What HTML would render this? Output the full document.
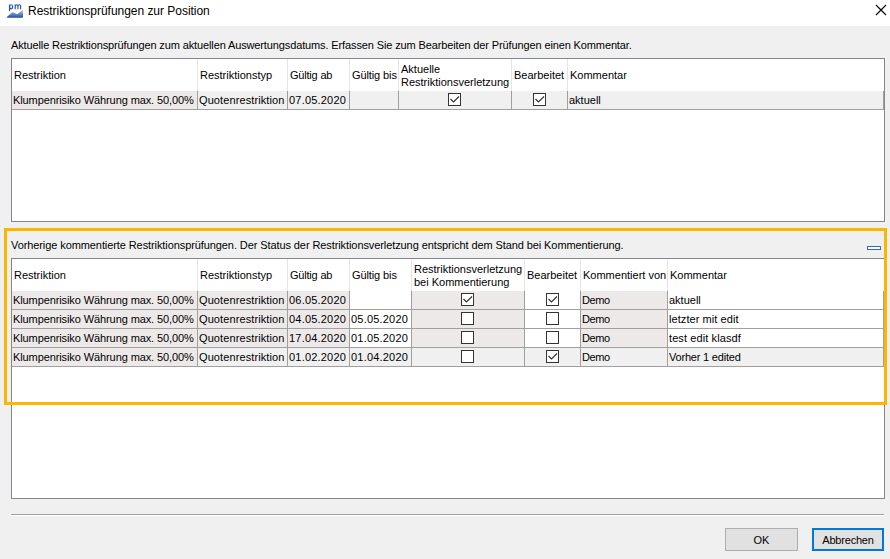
<!DOCTYPE html>
<html><head><meta charset="utf-8">
<style>
*{margin:0;padding:0;box-sizing:border-box}
html,body{width:890px;height:559px;overflow:hidden;background:#f0f0f0;font-family:"Liberation Sans",sans-serif;color:#000}
.a{position:absolute}
.t{position:absolute;font-size:11px;line-height:13px;white-space:nowrap}
#title{position:absolute;left:0;top:0;width:890px;height:26px;background:#fff}
.tbl{position:absolute;left:11px;width:874px;background:#fff;border:1px solid #828790}
.hs{position:absolute;top:0;width:1px;height:32px;background:#e5e5e5}
.row{position:absolute;left:0;height:19px;border-bottom:1px solid #a0a0a0}
.c{position:absolute;top:0;height:18px;border-right:1px solid #a0a0a0}
.p{background:#eee9e9}
.g{background:#f0f0f0}
.w{background:#fff}
.cb{position:absolute;width:13px;height:13px;border:1px solid #333;background:#fff}
.cb svg{position:absolute;left:0;top:0}
.btn{position:absolute;top:528px;width:73px;height:23px;background:#e1e1e1;border:1px solid #adadad;font-size:11px;line-height:21px;padding-top:1px;text-align:center}
</style></head><body>
<div id="title">
  <svg class="a" style="left:0;top:0" width="30" height="26" viewBox="0 0 30 26">
    <defs><linearGradient id="lg" x1="0" y1="9" x2="0" y2="18" gradientUnits="userSpaceOnUse"><stop offset="0" stop-color="#dfe7f5"/><stop offset="0.45" stop-color="#7b9ad0"/><stop offset="1" stop-color="#1a479f"/></linearGradient></defs>
    <g fill="none" stroke="#2452a8" stroke-width="1.15" transform="translate(0 0.4)"><path d="M9.5 4.2 V10.8"/><ellipse cx="11.1" cy="6.45" rx="1.55" ry="2.05"/><path d="M15.2 8.8 V4.2 M15.2 5.6 Q15.6 4.3 16.6 4.3 Q17.9 4.3 17.9 5.6 V8.8 M17.9 5.6 Q18.3 4.3 19.3 4.3 Q20.6 4.3 20.6 5.6 V8.8"/></g>
    <path d="M7 17.2 Q7 16.8 7.4 16.5 L12.4 12 L17.2 14.2 L23 9.5 L23 17 Q23 17.8 22.2 17.8 L7.6 17.8 Q7 17.8 7 17.2 Z" fill="url(#lg)"/>
  </svg>
  <div class="a" style="left:28px;top:4px;font-size:12px;line-height:14px;white-space:nowrap;letter-spacing:-0.03px">Restriktionsprüfungen zur Position</div>
  <svg class="a" style="left:875px;top:4px" width="12" height="12" viewBox="0 0 12 12"><path d="M1 1 L11 11 M11 1 L1 11" stroke="#000" stroke-width="1.1"/></svg>
</div>

<div class="t" style="left:11px;top:39px;letter-spacing:-0.125px">Aktuelle Restriktionsprüfungen zum aktuellen Auswertungsdatums. Erfassen Sie zum Bearbeiten der Prüfungen einen Kommentar.</div>

<div class="tbl" style="top:58px;height:164px">
<div class="hs" style="left:185px"></div>
<div class="hs" style="left:275px"></div>
<div class="hs" style="left:337px"></div>
<div class="hs" style="left:386px"></div>
<div class="hs" style="left:499px"></div>
<div class="hs" style="left:555px"></div>
<div class="t" style="left:2px;top:10px;">Restriktion</div>
<div class="t" style="left:188px;top:10px;">Restriktionstyp</div>
<div class="t" style="left:278px;top:10px;letter-spacing:-0.2px;">Gültig ab</div>
<div class="t" style="left:340px;top:10px;letter-spacing:-0.1px;">Gültig bis</div>
<div class="t" style="left:389px;top:4px">Aktuelle<br>Restriktionsverletzung</div>
<div class="t" style="left:502px;top:10px;">Bearbeitet</div>
<div class="t" style="left:558px;top:10px;">Kommentar</div>
<div class="row" style="top:32px;width:872px">
<div class="c p" style="left:0px;width:186px"></div>
<div class="c g" style="left:186px;width:90px"></div>
<div class="c g" style="left:276px;width:62px"></div>
<div class="c g" style="left:338px;width:49px"></div>
<div class="c g" style="left:387px;width:113px"></div>
<div class="c g" style="left:500px;width:56px"></div>
<div class="c g" style="left:556px;width:316px"></div>
<div class="t" style="left:1px;top:3px;letter-spacing:-0.1px;">Klumpenrisiko Währung max. 50,00%</div>
<div class="t" style="left:187px;top:3px;letter-spacing:0.1px;">Quotenrestriktion</div>
<div class="t" style="left:277px;top:3px;letter-spacing:0.2px;">07.05.2020</div>
<div class="cb" style="left:436px;top:2px"><svg width="11" height="11"><path d="M1.5 5 L4.5 8 L10 2.5" stroke="#333" stroke-width="1.2" fill="none"/></svg></div>
<div class="cb" style="left:521px;top:2px"><svg width="11" height="11"><path d="M1.5 5 L4.5 8 L10 2.5" stroke="#333" stroke-width="1.2" fill="none"/></svg></div>
<div class="t" style="left:557px;top:3px;">aktuell</div>
</div>
</div>
<div class="tbl" style="top:258px;height:241px">
<div class="hs" style="left:185px"></div>
<div class="hs" style="left:275px"></div>
<div class="hs" style="left:337px"></div>
<div class="hs" style="left:399px"></div>
<div class="hs" style="left:512px"></div>
<div class="hs" style="left:568px"></div>
<div class="hs" style="left:655px"></div>
<div class="t" style="left:2px;top:10px;">Restriktion</div>
<div class="t" style="left:188px;top:10px;">Restriktionstyp</div>
<div class="t" style="left:278px;top:10px;letter-spacing:-0.2px;">Gültig ab</div>
<div class="t" style="left:340px;top:10px;letter-spacing:-0.1px;">Gültig bis</div>
<div class="t" style="left:402px;top:4px">Restriktionsverletzung<br>bei Kommentierung</div>
<div class="t" style="left:515px;top:10px;">Bearbeitet</div>
<div class="t" style="left:571px;top:10px;">Kommentiert von</div>
<div class="t" style="left:658px;top:10px;">Kommentar</div>
<div class="row" style="top:32px;width:872px">
<div class="c p" style="left:0px;width:186px"></div>
<div class="c p" style="left:186px;width:90px"></div>
<div class="c p" style="left:276px;width:62px"></div>
<div class="c w" style="left:338px;width:62px"></div>
<div class="c p" style="left:400px;width:113px"></div>
<div class="c w" style="left:513px;width:56px"></div>
<div class="c p" style="left:569px;width:87px"></div>
<div class="c w" style="left:656px;width:216px"></div>
<div class="t" style="left:1px;top:3px;letter-spacing:-0.1px;">Klumpenrisiko Währung max. 50,00%</div>
<div class="t" style="left:187px;top:3px;letter-spacing:0.1px;">Quotenrestriktion</div>
<div class="t" style="left:277px;top:3px;letter-spacing:0.2px;">06.05.2020</div>
<div class="cb" style="left:449px;top:2px"><svg width="11" height="11"><path d="M1.5 5 L4.5 8 L10 2.5" stroke="#333" stroke-width="1.2" fill="none"/></svg></div>
<div class="cb" style="left:534px;top:2px"><svg width="11" height="11"><path d="M1.5 5 L4.5 8 L10 2.5" stroke="#333" stroke-width="1.2" fill="none"/></svg></div>
<div class="t" style="left:570px;top:3px;letter-spacing:-0.4px;">Demo</div>
<div class="t" style="left:657px;top:3px;">aktuell</div>
</div>
<div class="row" style="top:51px;width:872px">
<div class="c p" style="left:0px;width:186px"></div>
<div class="c p" style="left:186px;width:90px"></div>
<div class="c p" style="left:276px;width:62px"></div>
<div class="c w" style="left:338px;width:62px"></div>
<div class="c p" style="left:400px;width:113px"></div>
<div class="c w" style="left:513px;width:56px"></div>
<div class="c p" style="left:569px;width:87px"></div>
<div class="c w" style="left:656px;width:216px"></div>
<div class="t" style="left:1px;top:3px;letter-spacing:-0.1px;">Klumpenrisiko Währung max. 50,00%</div>
<div class="t" style="left:187px;top:3px;letter-spacing:0.1px;">Quotenrestriktion</div>
<div class="t" style="left:277px;top:3px;letter-spacing:0.2px;">04.05.2020</div>
<div class="t" style="left:339px;top:3px;letter-spacing:0.2px;">05.05.2020</div>
<div class="cb" style="left:449px;top:2px"></div>
<div class="cb" style="left:534px;top:2px"></div>
<div class="t" style="left:570px;top:3px;letter-spacing:-0.4px;">Demo</div>
<div class="t" style="left:657px;top:3px;letter-spacing:0.07px;">letzter mit edit</div>
</div>
<div class="row" style="top:70px;width:872px">
<div class="c p" style="left:0px;width:186px"></div>
<div class="c p" style="left:186px;width:90px"></div>
<div class="c p" style="left:276px;width:62px"></div>
<div class="c w" style="left:338px;width:62px"></div>
<div class="c p" style="left:400px;width:113px"></div>
<div class="c w" style="left:513px;width:56px"></div>
<div class="c p" style="left:569px;width:87px"></div>
<div class="c w" style="left:656px;width:216px"></div>
<div class="t" style="left:1px;top:3px;letter-spacing:-0.1px;">Klumpenrisiko Währung max. 50,00%</div>
<div class="t" style="left:187px;top:3px;letter-spacing:0.1px;">Quotenrestriktion</div>
<div class="t" style="left:277px;top:3px;letter-spacing:0.2px;">17.04.2020</div>
<div class="t" style="left:339px;top:3px;letter-spacing:0.2px;">01.05.2020</div>
<div class="cb" style="left:449px;top:2px"></div>
<div class="cb" style="left:534px;top:2px"></div>
<div class="t" style="left:570px;top:3px;letter-spacing:-0.4px;">Demo</div>
<div class="t" style="left:657px;top:3px;letter-spacing:0.1px;">test edit klasdf</div>
</div>
<div class="row" style="top:89px;width:872px">
<div class="c p" style="left:0px;width:186px"></div>
<div class="c g" style="left:186px;width:90px"></div>
<div class="c g" style="left:276px;width:62px"></div>
<div class="c g" style="left:338px;width:62px"></div>
<div class="c g" style="left:400px;width:113px"></div>
<div class="c g" style="left:513px;width:56px"></div>
<div class="c g" style="left:569px;width:87px"></div>
<div class="c g" style="left:656px;width:216px"></div>
<div class="t" style="left:1px;top:3px;letter-spacing:-0.1px;">Klumpenrisiko Währung max. 50,00%</div>
<div class="t" style="left:187px;top:3px;letter-spacing:0.1px;">Quotenrestriktion</div>
<div class="t" style="left:277px;top:3px;letter-spacing:0.2px;">01.02.2020</div>
<div class="t" style="left:339px;top:3px;letter-spacing:0.2px;">01.04.2020</div>
<div class="cb" style="left:449px;top:2px"></div>
<div class="cb" style="left:534px;top:2px"><svg width="11" height="11"><path d="M1.5 5 L4.5 8 L10 2.5" stroke="#333" stroke-width="1.2" fill="none"/></svg></div>
<div class="t" style="left:570px;top:3px;letter-spacing:-0.4px;">Demo</div>
<div class="t" style="left:657px;top:3px;letter-spacing:-0.2px;">Vorher 1 edited</div>
</div>
</div>
<!-- orange box -->
<div class="a" style="left:4px;top:228px;width:883px;height:177px;border:3px solid #fbb700"></div>

<div class="t" style="left:11px;top:239px;letter-spacing:-0.09px">Vorherige kommentierte Restriktionsprüfungen. Der Status der Restriktionsverletzung entspricht dem Stand bei Kommentierung.</div>
<div class="a" style="left:867px;top:246px;width:14px;height:4px;border:1px solid #3365c8;border-radius:0.5px;background:#fff"></div>

<div class="a" style="left:11px;top:514px;width:873px;height:1px;background:#a0a0a0"></div>
<div class="a" style="left:11px;top:515px;width:873px;height:1px;background:#fff"></div>
<div class="btn" style="left:725px">OK</div>
<div class="btn" style="left:812px;width:72px;border:2px solid #0078d7;line-height:19px;letter-spacing:-0.2px">Abbrechen</div>
</body></html>
